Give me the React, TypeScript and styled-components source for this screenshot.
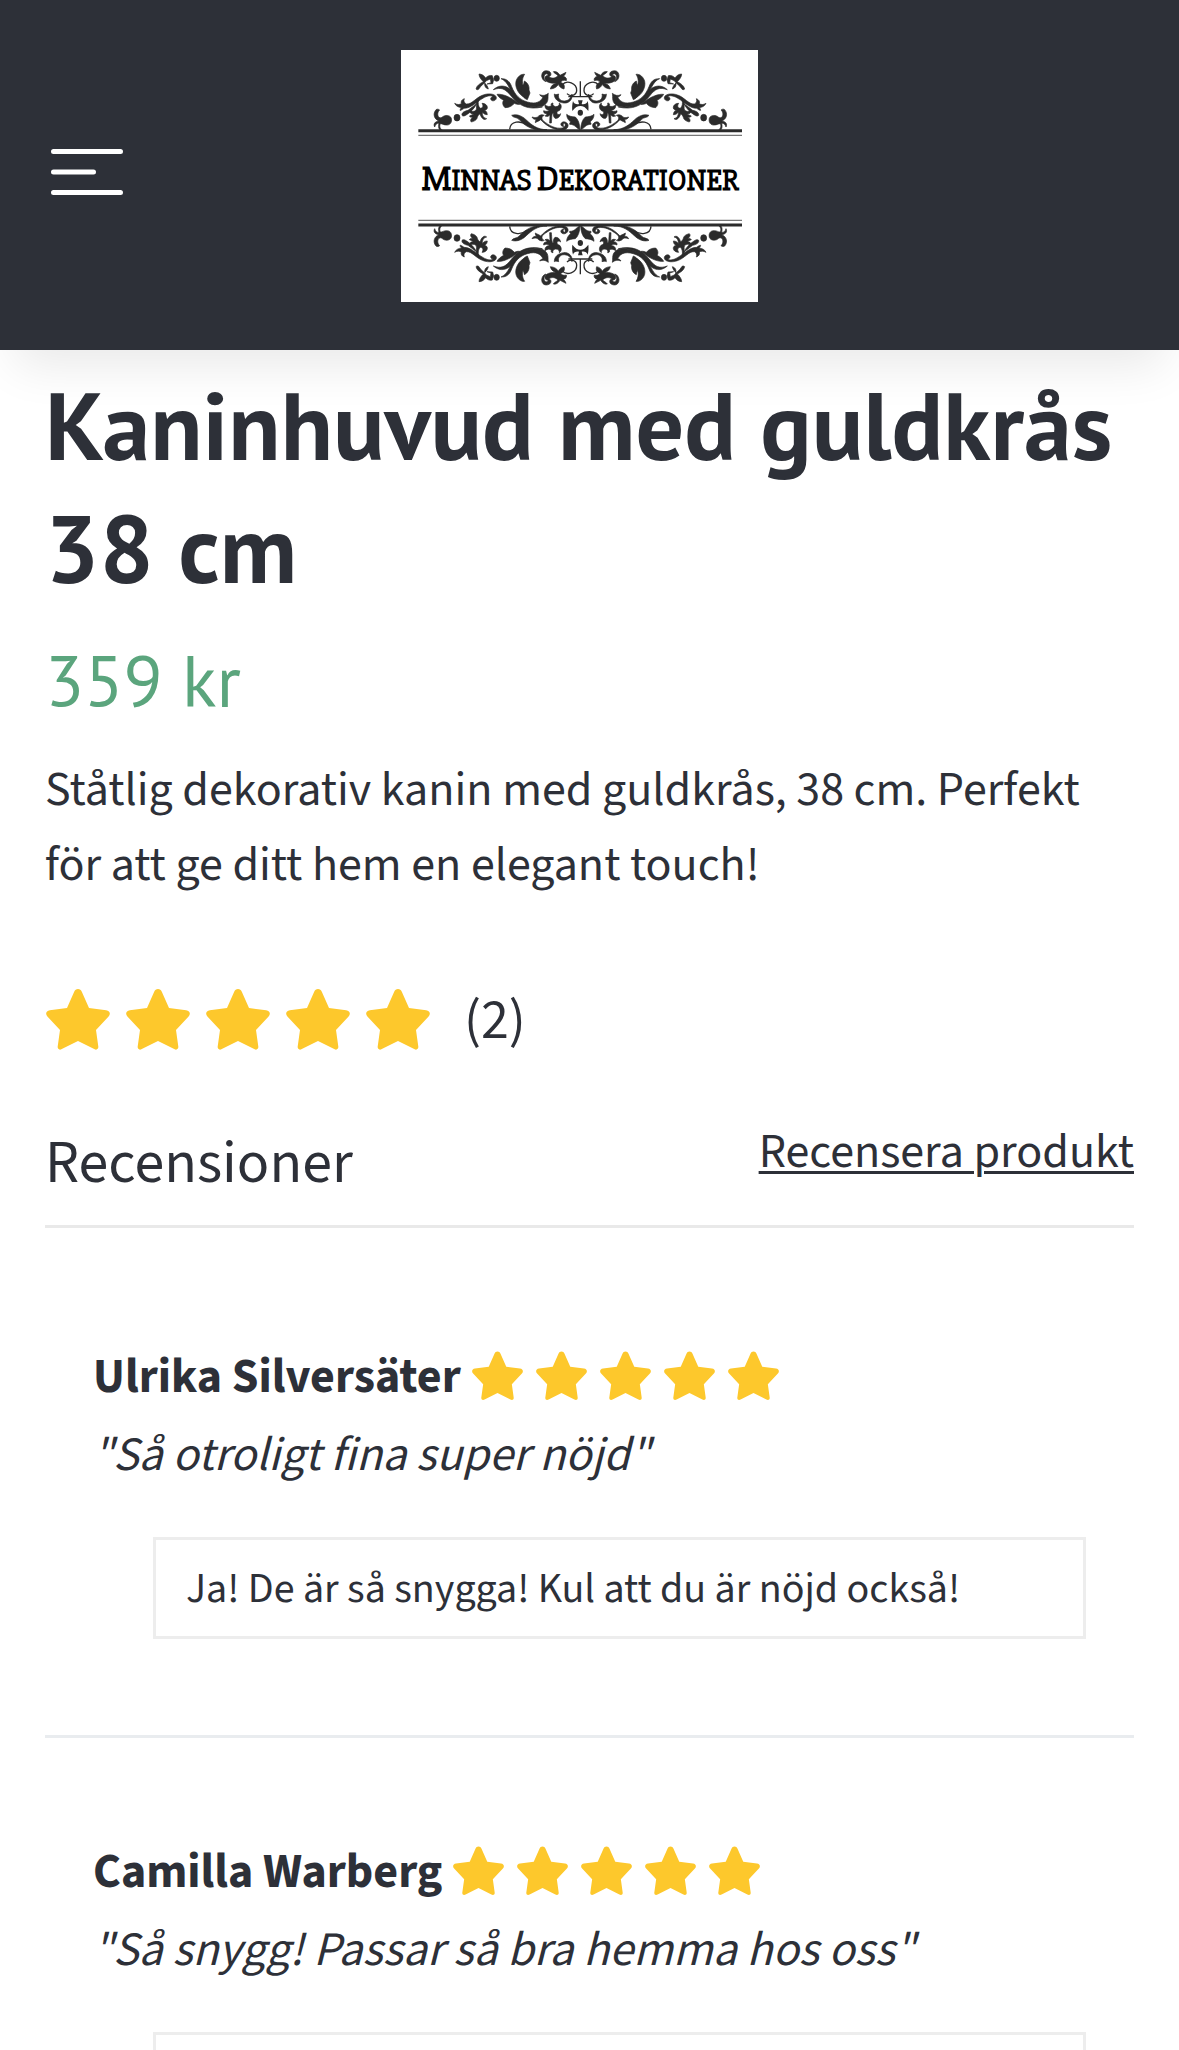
import React from 'react';
import styled, { createGlobalStyle } from 'styled-components';

const ink = '#2d3038';
const gold = '#fdc82c';
const bodyFont = "'Source Sans 3', 'Noto Sans CJK SC', 'Noto Sans', sans-serif";
const headingFont = "'PT Sans', 'Open Sans', sans-serif";
const quoteFont = "'Noto Sans CJK SC', 'Noto Sans', sans-serif";

const GlobalStyle = createGlobalStyle`
  *, *::before, *::after { box-sizing: border-box; }
  body {
    margin: 0;
    background: #fff;
    color: ${ink};
    font: 400 48px/75px ${bodyFont};
  }
  h1, h2, h3, p, ul { margin: 0; padding: 0; }
`;

const Header = styled.header`
  display: grid;
  grid-template-columns: 1fr auto 1fr;
  align-items: center;
  padding: 50px 65px 48px 45px;
  background: ${ink};
  box-shadow: 0 30px 45px -15px rgba(0, 0, 0, 0.09);
`;

const MenuButton = styled.button`
  display: flex;
  justify-self: start;
  margin-bottom: 8px;
  padding: 6px;
  border: 0;
  background: none;
  cursor: pointer;
`;

const LogoLink = styled.a`
  display: block;
  background: #fff;
`;

const LogoArt = styled.svg`
  display: block;
  width: 357px;
  height: 252px;
`;

const LogoText = styled.text`
  fill: #000;
  font: 700 90px 'Slabo 27px', 'Liberation Serif', serif;
`;

const LogoInitial = styled.tspan`
  font-size: 104px;
`;

const Main = styled.main`
  display: flex;
  flex-direction: column;
  padding: 13px 45px 0;
`;

const Title = styled.h1`
  font: 700 96px/123px ${headingFont};
`;

const Price = styled.p`
  margin-top: 27px;
  font: 400 72px/90px ${headingFont};
  color: #5ba57d;
`;

const Description = styled.p`
  margin-top: 27px;
`;

const Summary = styled.div`
  display: flex;
  align-items: center;
  gap: 34px;
  margin-top: 78px;
  font-size: 56px;
  line-height: 80px;
`;

const StarRow = styled.span<{ $gap: number }>`
  display: inline-flex;
  gap: ${({ $gap }) => $gap}px;
  margin: 0 0 4px 1px;
`;

const ReviewsHeader = styled.div`
  display: flex;
  justify-content: space-between;
  align-items: flex-start;
  margin-top: 54px;
  padding-bottom: 12px;
  border-bottom: 3px solid #e9e9e9;
`;

const ReviewsTitle = styled.h2`
  font-size: 60px;
  font-weight: 400;
  line-height: 98px;
`;

const ReviewLink = styled.a`
  color: inherit;
  text-decoration-thickness: 3px;
  text-underline-offset: 4px;
`;

const ReviewList = styled.ul`
  list-style: none;
`;

const Review = styled.li`
  padding: 112px 48px 96px;

  & + & {
    padding-top: 97px;
    border-top: 3px solid #e9ecef;
  }
`;

const Reviewer = styled.div`
  display: flex;
  align-items: center;
  gap: 10px;
`;

const Name = styled.strong`
  font-weight: 700;
`;

const Quote = styled.p`
  font: italic 400 43px/72px ${quoteFont};
`;

const Reply = styled.p`
  min-height: 102px;
  margin: 50px 0 0 60px;
  padding: 18px 30px 16px;
  border: 3px solid #ededed;
  font-size: 42px;
  line-height: 62px;
`;

const Star = ({ size }: { size: number }) => (
  <svg width={size} height={size} viewBox="0 0 64 64" aria-hidden="true">
    <path
      fill={gold}
      d="M32 2c1.800 0 3 1 3.800 2.700L43 21l17.200 2.200c3.600.5 4.800 3.600 2.400 6.300L50 43l2.300 16.500c.4 2.700-1.800 3.900-4.100 2.600L32 54 15.800 62.100c-2.300 1.300-4.500.1-4.100-2.600L14 43 1.400 29.500c-2.400-2.700-1.200-5.800 2.400-6.300L21 21l7.200-16.300C29 3 30.200 2 32 2Z"
    />
  </svg>
);

const Stars = ({ size, gap }: { size: number; gap: number }) => (
  <StarRow $gap={gap} role="img" aria-label="5 av 5 stjärnor">
    {[1, 2, 3, 4, 5].map((n) => (
      <Star key={n} size={size} />
    ))}
  </StarRow>
);

const Logo = () => (
  <LogoArt viewBox="3 0 1071 756" role="img" aria-label="Minnas Dekorationer">
    <defs>
      <g id="sprig" fill="#2b2b2b" stroke="#2b2b2b" strokeWidth="2">
        {/* outer bud */}
        <path d="M126 202c8-8 24-8 28 3 3 12-4 21-15 20-8 0-11-4-18-4-3 7-2 15 8 21-10 2-16-7-12-22-6-1-10 2-13 11-5-9 1-17 13-18-14-5-20-21-9-34 4-3 9-1 11 1-6 5-8 16-2 22 3 2 6 2 9 0Z" />
        <ellipse cx="171" cy="203" rx="9" ry="10" />
        <path d="M186 196c-2-8 8-13 18-15l26-20c-7 15-19 26-30 33-7 5-12 5-14 2Z" />
        {/* side branch with its leaf */}
        <path d="M164 160c8 5 15 4 20 1-2-7 1-12 9-15-3 8 0 13 6 16 17 1 29-19 48-26 21-9 44-3 42 9-2 9-15 10-17 2 0-5 4-7 7-6-5-7-19-3-29 3-22 12-36 31-58 31-5 4-11 7-12 6 1-5 3-7 5-8-9-1-17-4-21-13Z" />
        <path d="M230 150h6c-3 10-1 20 5 25 8-1 10-7 5-15 9 0 17 6 16 14-1 5-6 7-10 6 10 4 9 11 10 14-7 0-12-3-15-8-1 10 4 19 13 20-8 7-17-3-20-15-4 3-7 7-8 11-1 6-6 11-18 14-5-5-1-10 5-15-5 2-9 0-11-3 5-3 10-3 14-6-9 1-14-4-13-12 7 6 13 5 19 1 4-7-1-21 2-31Z" />
        {/* upper blossom */}
        <path d="M237 72c8 0 16 5 20 12 5-6 12-9 20-7l4 12-3 12-17 1 12-4-2-11-12 5c-5 9-16 13-21 23-2 5-8 5-10 2 2-10 11-16 22-22-6-6-13-14-13-23Z" />
        <path d="M254 99c5 4 9 10 11 18-8-2-12-8-11-18Z" />
        <ellipse cx="290" cy="85" rx="8" ry="9" />
        {/* long fronds */}
        <path d="M303 86c18-1 27 10 32 24 10 25 24 39 47 46 27 8 42-2 47-16-4 0-8-2-10-6 10 4 17 3 26-4-3 12 5 28-18 39-34 8-69-9-88-37-12-19-18-39-36-46Z" />
        <path d="M280 119c28-24 53-3 65 14 21 32 48 41 82 38-42 10-71-4-93-32-18-24-31-28-54-20Z" />
        <path d="M291 133c17-2 38 8 52 18l16 12c-6 1-12-1-16-3-6 8-16 13-28 13-7-6-9-16-4-22-9-5-16-10-20-18Z" />
        <path d="M374 73c-8 11-8 25-4 36 2 8-4 16 5 34-19-8-31-31-27-49 3-12 14-23 26-21Z" />
        <path d="M373 93c10 5 16 16 14 27l3 9-8 20c-12-4-20-18-19-30 3-8 9-16 10-26Z" />
        {/* inner blossom and scrolls */}
        <path d="M425 78c0-14 11-19 22-14 8 4 8 15-1 16 10 7 20 5 28-3-5-5-12-8-14-12 9-2 15 3 20 11l18-9c-2 6-4 9-8 12 8 2 11 7 9 13-9-2-13-1-17 5 8 3 14 9 10 20-9-2-14-7-17-14-4 8-12 13-24 14 2-10 9-15 18-18-17 2-33-3-34-13-1-6 4-10 9-9 1-7-10-9-12 4 0 6 4 11 6 14-8-2-12-9-13-17Z" />
        <path d="M463 132c4 3 10 1 13 0-4 15 9 24 22 20 12-2 15-12 18-20 3 17-10 29-25 27-17-2-29-13-28-27Z" />
        <path d="M486 105c14-17 45-6 44 17-1 15-20 19-29 9" fill="none" strokeWidth="4" />
        {/* lower vine */}
        <path d="M435 165c8 5 14 6 19 2-2-5 0-8 5-8-2 6 1 9 8 11 8 0 12-5 11-11 7 5 8 14 1 22-6 3-9 4-8 10 4 4 8 3 11 0-2 10-9 15-17 14-4-4-6-10-5-17-6 2-4 15-6 31h-5l1-25c-5 6-9 6-15 4 3-2 6-5 6-7-8 1-11-4-10-9 7 3 13 3 17-2-9 0-14-6-13-15Z" />
        <path d="M396 201c10 3 15 3 21-4 9-5 13-2 16-1-8 3-9 10-4 16 20 16 38 25 58 22 10-4 10-10 7-14-6 1-6 8-2 9-7 2-12-5-8-10 5-6 16-4 20 5 2 9-7 17-20 16-28-1-47-15-62-31-3 3-10 5-16 9 0-5 1-8 4-10-7 1-12-2-14-7Z" />
        <path d="M335 196c14-5 31 1 44 14 15 14 32 29 62 29-40 8-70-14-84-31-7-7-17-4-22-12Z" />
        <path d="M329 238c2-25 32-28 54-12" fill="none" strokeWidth="4" />
        <path d="M500 193c6 6 16 7 26 8 9 8 13 20 14 38-12-4-14-16-31-16-1-4 2-6 3-7-8-6-12-14-12-23Z" />
      </g>
      <g id="ornament">
        <use href="#sprig" />
        <use href="#sprig" transform="translate(1082 0) scale(-1 1)" />
        <path d="M541 94v46M505 140h72" fill="none" stroke="#2b2b2b" strokeWidth="4" />
        <ellipse cx="541" cy="188" rx="8" ry="9" fill="#2b2b2b" />
        <path d="M519 153c2 8 11 11 18 9l-3-11h14l-3 11c7 2 16-1 18-9 3 11 3 21 2 30-8-11-16-15-24-15s-16 4-24 15c-1-9-1-19 2-30Z" fill="#2b2b2b" />
        <path d="M55 242h971" stroke="#2b2b2b" strokeWidth="9" />
        <path d="M55 256h971" stroke="#777" strokeWidth="4" />
      </g>
    </defs>
    <use href="#ornament" />
    <use href="#ornament" transform="translate(0 767) scale(1 -1)" />
    <LogoText x="541" y="420" textAnchor="middle">
      <LogoInitial>M</LogoInitial>INNAS <LogoInitial>D</LogoInitial>EKORATIONER
    </LogoText>
  </LogoArt>
);

const reviews = [
  {
    name: 'Ulrika Silversäter',
    quote: 'Så otroligt fina super nöjd',
    reply: 'Ja! De är så snygga! Kul att du är nöjd också!',
  },
  {
    name: 'Camilla Warberg',
    quote: 'Så snygg! Passar så bra hemma hos oss',
    reply: '',
  },
];

export default function App() {
  return (
    <>
      <GlobalStyle />
      <Header>
        <MenuButton type="button" aria-label="Meny">
          <svg width="72" height="46" viewBox="0 0 72 46" fill="none" stroke="#fff" strokeWidth="5" strokeLinecap="round">
            <path d="M2.500 2.500h67M2.500 23h40M2.500 43.500h67" />
          </svg>
        </MenuButton>
        <LogoLink href="#">
          <Logo />
        </LogoLink>
      </Header>
      <Main>
        <Title>Kaninhuvud med guldkrås 38 cm</Title>
        <Price>359 kr</Price>
        <Description>
          Ståtlig dekorativ kanin med guldkrås, 38 cm. Perfekt för att ge ditt hem en elegant touch!
        </Description>
        <Summary>
          <Stars size={64} gap={16} />
          <span>(2)</span>
        </Summary>
        <ReviewsHeader>
          <ReviewsTitle>Recensioner</ReviewsTitle>
          <ReviewLink href="#">Recensera produkt</ReviewLink>
        </ReviewsHeader>
        <ReviewList>
          {reviews.map((r) => (
            <Review key={r.name}>
              <Reviewer>
                <Name>{r.name}</Name>
                <Stars size={51} gap={13} />
              </Reviewer>
              <Quote>"{r.quote}"</Quote>
              <Reply>{r.reply}</Reply>
            </Review>
          ))}
        </ReviewList>
      </Main>
    </>
  );
}
